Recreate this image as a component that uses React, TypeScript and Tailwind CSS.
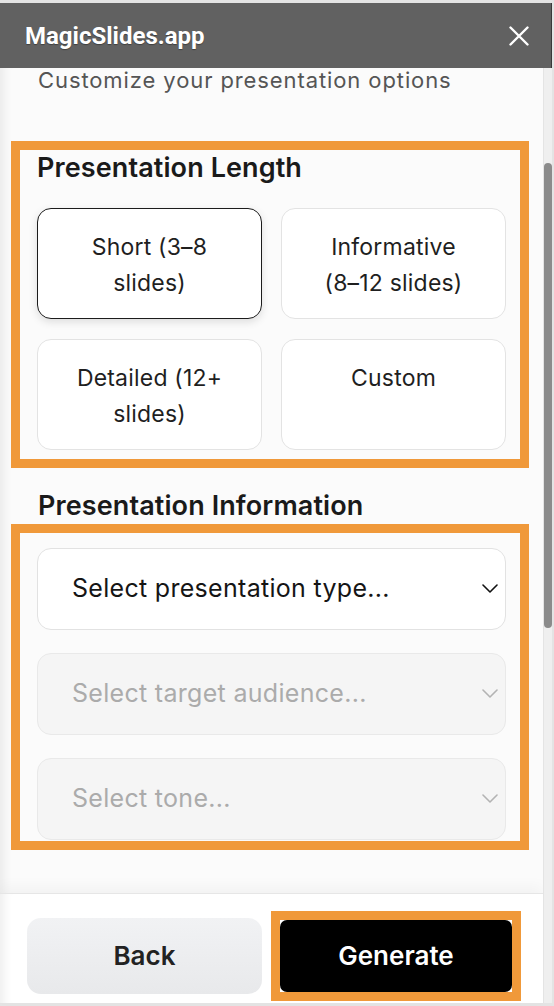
const lengths = [
  { label: 'Short (3–8 slides)', selected: true },
  { label: 'Informative (8–12 slides)', selected: false },
  { label: 'Detailed (12+ slides)', selected: false },
  { label: 'Custom', selected: false },
];

const selects = [
  { label: 'Select presentation type...', disabled: false },
  { label: 'Select target audience...', disabled: true },
  { label: 'Select tone...', disabled: true },
];

function Chevron({ className }: { className?: string }) {
  return (
    <svg width="16" height="9" viewBox="0 0 16 9" fill="none" className={className}>
      <path d="M1 1l7 7 7-7" stroke="currentColor" strokeWidth="1.6" strokeLinecap="round" strokeLinejoin="round" />
    </svg>
  );
}

export default function App() {
  return (
    <div className="w-[554px] h-[1006px] bg-[#e4e4e4] pt-[3px] overflow-hidden font-['Inter',sans-serif]">
      <div className="w-[552px] h-[1000px] flex flex-col bg-[#f0f0f0]">
        {/* title bar */}
        <div className="h-[65px] shrink-0 bg-[#616161] border-r border-[#3a3a3a] flex items-center justify-between pl-[25px] pr-[22px]">
          <span className="font-['Roboto',sans-serif] font-bold text-[24px] text-white [text-shadow:0_1px_1px_rgba(0,0,0,0.35)]">
            MagicSlides.app
          </span>
          <svg width="20" height="20" viewBox="0 0 20 20" className="text-white">
            <path d="M1.5 1.5 18.5 18.5M18.5 1.5 1.5 18.5" stroke="currentColor" strokeWidth="2.4" strokeLinecap="round" />
          </svg>
        </div>

        <div className="flex flex-1 min-h-0">
          <div className="w-[543px] flex flex-col">
            {/* scrolling content */}
            <div className="h-[825px] overflow-hidden bg-[#fbfbfb] shadow-[inset_12px_0_10px_-8px_rgba(0,0,0,0.07)]">
              <p className="pl-[38px] text-[22px] leading-[24px] tracking-[0.9px] text-[#555555]">
                Customize your presentation options
              </p>

              <div className="mt-[49px] ml-[11px] w-[518px] border-[9px] border-[#f0993a] pl-[17px] pr-[14px] pt-[2px] pb-[9px]">
                <h2 className="text-[27px] leading-[32px] font-semibold text-[#1a1a1a] tracking-[0.1px]">Presentation Length</h2>
                <div className="mt-[24px] grid grid-cols-2 gap-x-[19px] gap-y-[20px]">
                  {lengths.map((item) => (
                    <button
                      key={item.label}
                      className={`h-[111px] rounded-[14px] bg-white px-4 pt-[20px] flex justify-center text-[23px] leading-[36px] tracking-[0.2px] text-[#1f1f1f] text-center ${
                        item.selected
                          ? 'border-[1.5px] border-[#1c1c1c] shadow-[0_3px_8px_rgba(0,0,0,0.12)]'
                          : 'border-[1.5px] border-[#e3e3e3]'
                      }`}
                    >
                      <span className="max-w-[165px]">{item.label}</span>
                    </button>
                  ))}
                </div>
              </div>

              <h2 className="mt-[22px] pl-[38px] text-[27px] leading-[32px] font-semibold text-[#1a1a1a] tracking-[0.1px]">
                Presentation Information
              </h2>

              <div className="mt-[2px] ml-[11px] w-[518px] h-[326px] border-[9px] border-[#f0993a] pl-[17px] pr-[14px] pt-[15px] flex flex-col gap-[23px]">
                {selects.map((s) => (
                  <div
                    key={s.label}
                    className={`h-[82px] shrink-0 rounded-[14px] border-[1.5px] flex items-center justify-between pl-[34px] pr-[7px] ${
                      s.disabled ? 'bg-[#f5f5f5] border-[#e9e9e9] text-[#ababab]' : 'bg-white border-[#e2e2e2] text-[#151515]'
                    }`}
                  >
                    <span className="text-[25px] tracking-[0.3px]">{s.label}</span>
                    <Chevron className={`mb-[2px] ${s.disabled ? 'text-[#b3b3b3]' : 'text-[#111111]'}`} />
                  </div>
                ))}
              </div>
            </div>

            {/* footer */}
            <div className="h-[110px] shrink-0 bg-white border-t border-[#e6e6e6] shadow-[0_-6px_14px_rgba(0,0,0,0.04),inset_12px_0_10px_-8px_rgba(0,0,0,0.07)] pt-[14px] pl-[27px] pr-[22px] flex items-center gap-[9px]">
              <button className="w-[235px] h-[76px] rounded-[14px] bg-gradient-to-b from-[#f1f2f4] to-[#e8e9eb] text-[26px] font-semibold text-[#222222]">
                Back
              </button>
              <div className="border-[9px] border-[#f0993a] bg-white">
                <button className="w-[232px] h-[72px] rounded-[7px] bg-black text-white text-[26px] font-semibold">
                  Generate
                </button>
              </div>
            </div>
          </div>

          {/* scrollbar */}
          <div className="w-[9px] bg-[#efefef] pt-[95px] border-l border-[#e4e4e4]">
            <div className="h-[465px] w-[8px] rounded-full bg-[#8b8b8b]" />
          </div>
        </div>
      </div>
    </div>
  );
}
